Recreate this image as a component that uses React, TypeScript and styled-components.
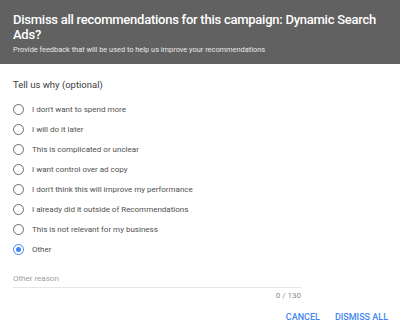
import { FC, useState } from 'react';
import styled, { createGlobalStyle } from 'styled-components';

const GlobalStyle = createGlobalStyle`
    html, body {
        margin: 0;
        padding: 0;
        background: #ffffff;
    }
    body {
        font-family: Roboto, "Liberation Sans", Arial, sans-serif;
    }
`

const StyledDialog = styled.div`
    width: 400px;
    height: 332px;
    background: #ffffff;
    display: flex;
    flex-direction: column;
    overflow: hidden;
`

const StyledHeader = styled.div`
    background: #616161;
    color: #ffffff;
    padding: 12px 10px 10px 13px;
    height: 64px;
    box-sizing: border-box;
    display: flex;
    flex-direction: column;
    h1 {
        margin: 0;
        font-size: 13px;
        line-height: 15px;
        font-weight: 500;
        letter-spacing: -0.25px;
    }
    p {
        margin: 3px 0 0;
        font-size: 7.4px;
        line-height: 10px;
        color: #e8e8e8;
    }
`

const StyledBody = styled.div`
    padding: 15px 13px 0;
    display: flex;
    flex-direction: column;
`

const StyledQuestion = styled.div`
    font-size: 9.5px;
    line-height: 12px;
    color: #3c3c3c;
    margin-bottom: 8px;
`

const StyledOptions = styled.div`
    display: flex;
    flex-direction: column;
`

const StyledOption = styled.label`
    display: flex;
    align-items: center;
    height: 20px;
    gap: 8px;
    font-size: 8px;
    color: #505050;
    cursor: pointer;
`

const StyledRadio = styled.span<{ $checked: boolean }>`
    width: 11px;
    height: 11px;
    box-sizing: border-box;
    border-radius: 50%;
    border: 1.5px solid ${props => props.$checked ? '#4285f4' : '#6b6b6b'};
    display: flex;
    align-items: center;
    justify-content: center;
    &:after {
        content: '';
        width: 5px;
        height: 5px;
        border-radius: 50%;
        background: ${props => props.$checked ? '#4285f4' : 'transparent'};
    }
`

const StyledField = styled.div`
    width: 288px;
    margin-top: 15px;
    display: flex;
    flex-direction: column;
    input {
        border: none;
        border-bottom: 1px solid #e6e6e6;
        outline: none;
        padding: 0 0 4px;
        font-family: inherit;
        font-size: 8px;
        color: #444;
        background: none;
        &::placeholder {
            color: #9e9e9e;
        }
    }
    span {
        align-self: flex-end;
        margin-top: 3px;
        font-size: 8px;
        color: #8a8a8a;
    }
`

const StyledActions = styled.div`
    display: flex;
    justify-content: flex-end;
    gap: 15px;
    padding: 12px 12px 0;
`

const StyledAction = styled.button`
    background: none;
    border: none;
    padding: 0;
    font-family: inherit;
    font-size: 9px;
    font-weight: 500;
    color: #4285f4;
    text-transform: uppercase;
    cursor: pointer;
`

const reasons = [
    'I don\'t want to spend more',
    'I will do it later',
    'This is complicated or unclear',
    'I want control over ad copy',
    'I don\'t think this will improve my performance',
    'I already did it outside of Recommendations',
    'This is not relevant for my business',
    'Other',
]

const App: FC = () => {
    const [selected, setSelected] = useState(7)
    return (
        <>
            <GlobalStyle />
            <StyledDialog>
                <StyledHeader>
                    <h1>Dismiss all recommendations for this campaign: Dynamic Search Ads?</h1>
                    <p>Provide feedback that will be used to help us improve your recommendations</p>
                </StyledHeader>
                <StyledBody>
                    <StyledQuestion>Tell us why (optional)</StyledQuestion>
                    <StyledOptions>
                        {reasons.map((reason, i) => (
                            <StyledOption key={reason} onClick={() => setSelected(i)}>
                                <StyledRadio $checked={selected === i} />
                                {reason}
                            </StyledOption>
                        ))}
                    </StyledOptions>
                    <StyledField>
                        <input type="text" placeholder="Other reason" />
                        <span>0 / 130</span>
                    </StyledField>
                </StyledBody>
                <StyledActions>
                    <StyledAction>Cancel</StyledAction>
                    <StyledAction>Dismiss all</StyledAction>
                </StyledActions>
            </StyledDialog>
        </>
    )
}

export default App;
